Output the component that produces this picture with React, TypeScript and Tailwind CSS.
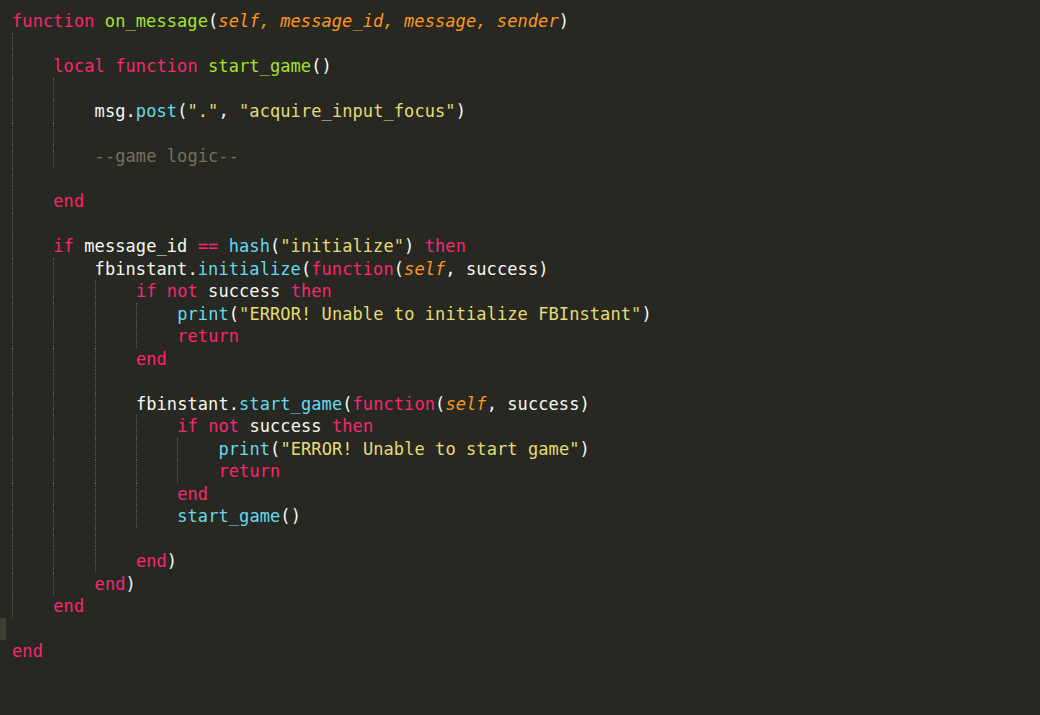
import React from 'react';

type Tok = [string, string];

const kw = 'text-[#f92672]';
const fn = 'text-[#a6e22e]';
const par = 'text-[#fd971f] italic';
const sup = 'text-[#66d9ef]';
const str = 'text-[#e6db74]';
const pl = 'text-[#f8f8f2]';
const cm = 'text-[#75715e]';

// indent = number of indent guides drawn before the text
const lines: { indent: number; toks: Tok[]; cursor?: boolean }[] = [
  {
    indent: 0,
    toks: [
      ['function ', kw],
      ['on_message', fn],
      ['(', pl],
      ['self, message_id, message, sender', par],
      [')', pl],
    ],
  },
  { indent: 1, toks: [] },
  { indent: 1, toks: [['local function ', kw], ['start_game', fn], ['()', pl]] },
  { indent: 2, toks: [] },
  {
    indent: 2,
    toks: [
      ['msg.', pl],
      ['post', sup],
      ['(', pl],
      ['"."', str],
      [', ', pl],
      ['"acquire_input_focus"', str],
      [')', pl],
    ],
  },
  { indent: 2, toks: [] },
  { indent: 2, toks: [['--game logic--', cm]] },
  { indent: 1, toks: [] },
  { indent: 1, toks: [['end', kw]] },
  { indent: 1, toks: [] },
  {
    indent: 1,
    toks: [
      ['if ', kw],
      ['message_id ', pl],
      ['==', kw],
      [' ', pl],
      ['hash', sup],
      ['(', pl],
      ['"initialize"', str],
      [') ', pl],
      ['then', kw],
    ],
  },
  {
    indent: 2,
    toks: [
      ['fbinstant.', pl],
      ['initialize', sup],
      ['(', pl],
      ['function', kw],
      ['(', pl],
      ['self', par],
      [', success)', pl],
    ],
  },
  { indent: 3, toks: [['if not ', kw], ['success ', pl], ['then', kw]] },
  {
    indent: 4,
    toks: [
      ['print', sup],
      ['(', pl],
      ['"ERROR! Unable to initialize FBInstant"', str],
      [')', pl],
    ],
  },
  { indent: 4, toks: [['return', kw]] },
  { indent: 3, toks: [['end', kw]] },
  { indent: 3, toks: [] },
  {
    indent: 3,
    toks: [
      ['fbinstant.', pl],
      ['start_game', sup],
      ['(', pl],
      ['function', kw],
      ['(', pl],
      ['self', par],
      [', success)', pl],
    ],
  },
  { indent: 4, toks: [['if not ', kw], ['success ', pl], ['then', kw]] },
  {
    indent: 5,
    toks: [
      ['print', sup],
      ['(', pl],
      ['"ERROR! Unable to start game"', str],
      [')', pl],
    ],
  },
  { indent: 5, toks: [['return', kw]] },
  { indent: 4, toks: [['end', kw]] },
  { indent: 4, toks: [['start_game', sup], ['()', pl]] },
  { indent: 3, toks: [] },
  { indent: 3, toks: [['end', kw], [')', pl]] },
  { indent: 2, toks: [['end', kw], [')', pl]] },
  { indent: 1, toks: [['end', kw]] },
  { indent: 0, toks: [], cursor: true },
  { indent: 0, toks: [['end', kw]] },
];

const App: React.FC = () => {
  return (
    <div
      className="w-[1040px] h-[715px] bg-[#272822] overflow-hidden pt-[10px] text-[17px] leading-[22.5px] tracking-[0.08px] whitespace-pre"
      style={{ fontFamily: '"DejaVu Sans Mono", "Liberation Mono", monospace' }}
    >
      {lines.map((line, i) => (
        <div key={i} className="flex h-[22.5px]">
          <div className="w-[12px] shrink-0 flex">
            {line.cursor && <div className="w-[6px] h-full bg-[#3e3d32]" />}
          </div>
          {Array.from({ length: line.indent }).map((_, k) => (
            <span key={k} className="w-[41.3px] shrink-0 h-full border-l border-dotted border-[#5f5f57]" />
          ))}
          <span>
            {line.toks.map(([t, c], j) => (
              <span key={j} className={c}>
                {t}
              </span>
            ))}
          </span>
        </div>
      ))}
    </div>
  );
};

export default App;
